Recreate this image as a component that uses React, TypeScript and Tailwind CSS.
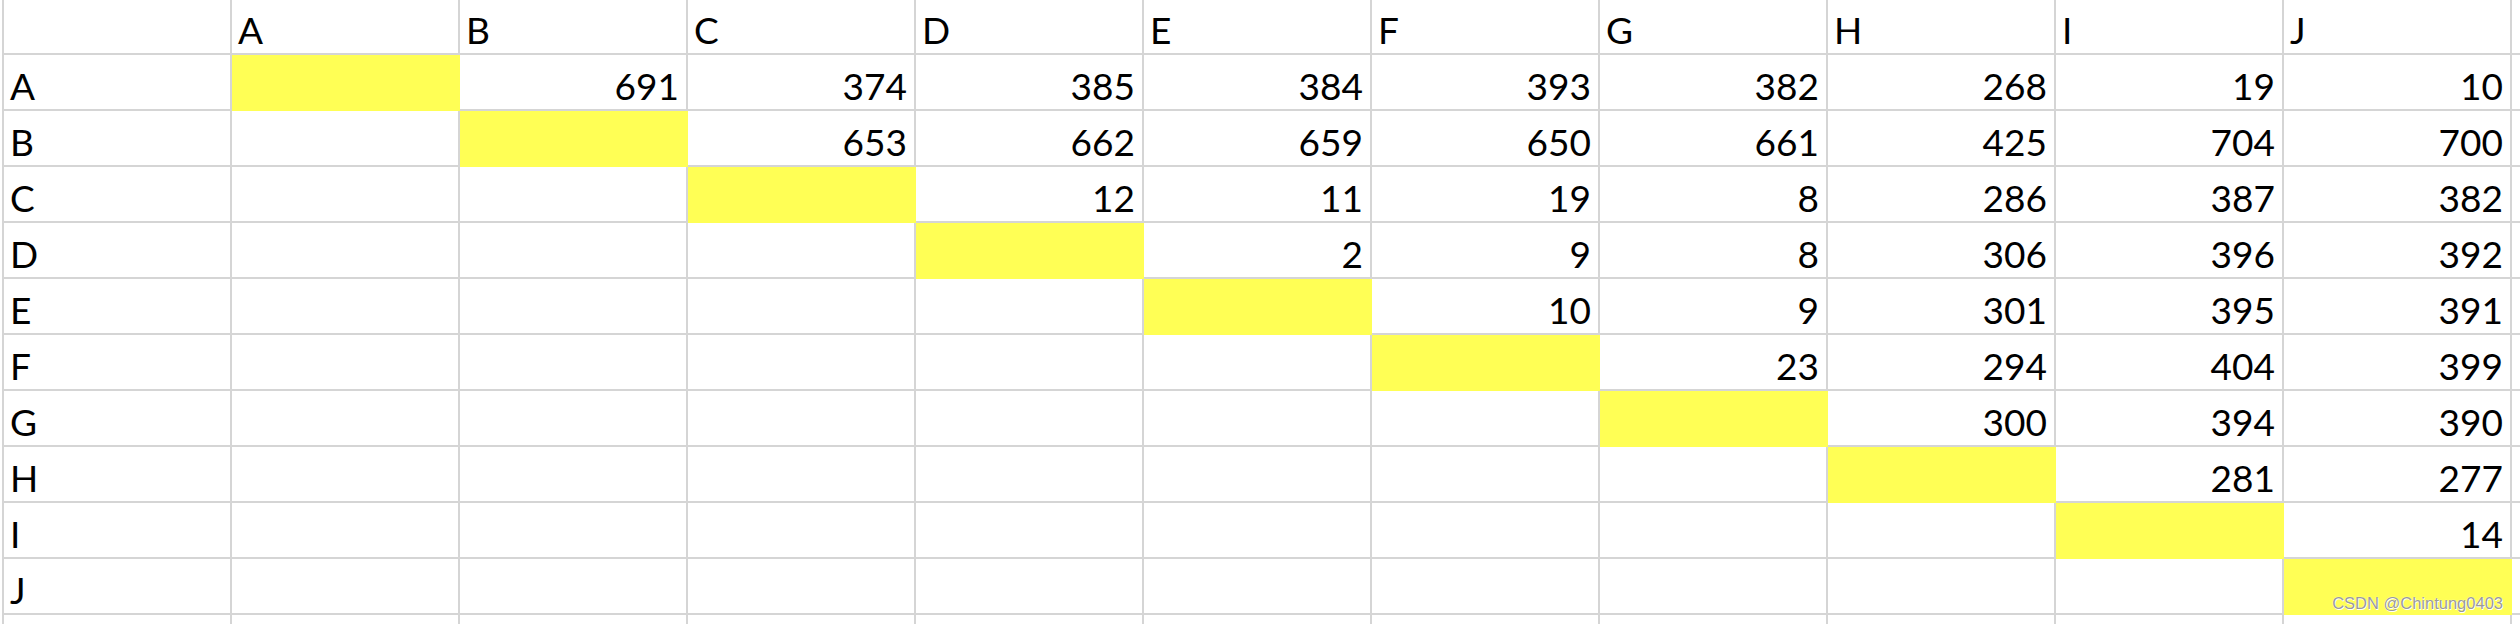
import React from "react";

const COLS = ["A", "B", "C", "D", "E", "F", "G", "H", "I", "J"];

const DATA: Record<string, Record<string, string>> = {
  A: { B: "691", C: "374", D: "385", E: "384", F: "393", G: "382", H: "268", I: "19", J: "10" },
  B: { C: "653", D: "662", E: "659", F: "650", G: "661", H: "425", I: "704", J: "700" },
  C: { D: "12", E: "11", F: "19", G: "8", H: "286", I: "387", J: "382" },
  D: { E: "2", F: "9", G: "8", H: "306", I: "396", J: "392" },
  E: { F: "10", G: "9", H: "301", I: "395", J: "391" },
  F: { G: "23", H: "294", I: "404", J: "399" },
  G: { H: "300", I: "394", J: "390" },
  H: { I: "281", J: "277" },
  I: { J: "14" },
  J: {},
};

const line = "border-r-2 border-b-2 border-[#d5d5d5]";

export default function App() {
  return (
    <div className="relative w-[2520px] h-[624px] overflow-hidden bg-white text-black font-['Lato',sans-serif] text-[37px] leading-none">
      <div className="grid grid-cols-[232px_repeat(10,228px)_1fr] grid-rows-[55px_repeat(10,56px)_1fr] h-full">
        {/* header row */}
        <div className={`${line} ml-[2px] border-l-2`} />
        {COLS.map((c) => (
          <div key={"h" + c} className={`${line} flex items-end pl-[6px] pb-[5px]`}>
            {c}
          </div>
        ))}
        <div className="border-b-2 border-[#d5d5d5]" />

        {/* data rows */}
        {COLS.map((r) => (
          <React.Fragment key={"r" + r}>
            <div className={`${line} ml-[2px] border-l-2 flex items-end pl-[6px] pb-[5px]`}>{r}</div>
            {COLS.map((c) =>
              c === r ? (
                <div
                  key={r + c}
                  className="bg-[#ffff55] border-r-2 border-b-2 border-[#ffff55]"
                />
              ) : (
                <div key={r + c} className={`${line} flex items-end justify-end pr-[7px] pb-[5px]`}>
                  {DATA[r][c] ?? ""}
                </div>
              )
            )}
            <div className="border-b-2 border-[#d5d5d5]" />
          </React.Fragment>
        ))}

        {/* partial last row */}
        <div className="border-r-2 border-l-2 ml-[2px] border-[#d5d5d5]" />
        {COLS.map((c) => (
          <div key={"z" + c} className="border-r-2 border-[#d5d5d5]" />
        ))}
        <div />
      </div>

      <div className="absolute right-[17px] top-[595px] font-['Liberation_Sans',Arial,sans-serif] text-[16.5px] leading-none text-[#9a9a9a] [text-shadow:0_0_1px_#ffffff,1px_1px_0_#ffffff]">
        CSDN @Chintung0403
      </div>
    </div>
  );
}
